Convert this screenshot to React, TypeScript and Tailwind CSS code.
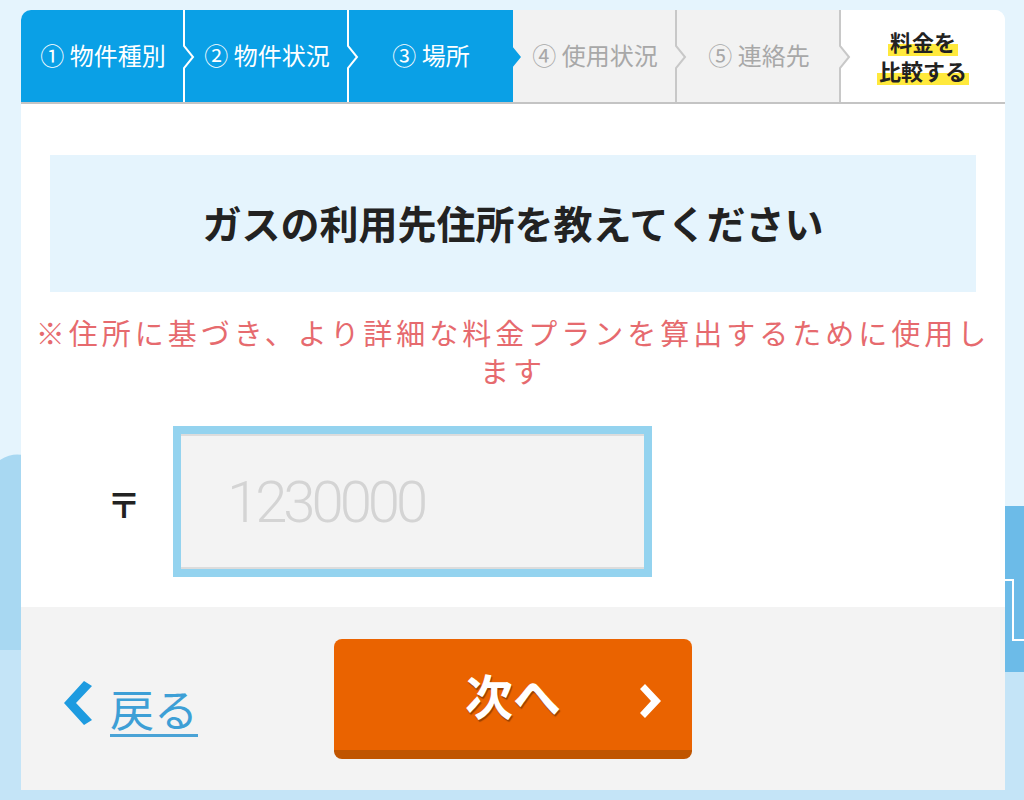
import { useState } from "react";

type StepState = "done" | "todo" | "final";

const steps: { label: string; state: StepState }[] = [
  { label: "① 物件種別", state: "done" },
  { label: "② 物件状況", state: "done" },
  { label: "③ 場所", state: "done" },
  { label: "④ 使用状況", state: "todo" },
  { label: "⑤ 連絡先", state: "todo" },
  { label: "", state: "final" },
];

const BLUE = "#0aa0e6";
const GREY = "#f2f2f2";

// chevron joint at the right edge of a step
function Joint({ fill, stroke }: { fill: string; stroke?: string }) {
  return (
    <svg
      className="absolute top-0 left-full z-10 -ml-[2px] h-[92px] w-[12px]"
      viewBox="0 0 12 92"
    >
      <polygon points="0,0 1,0 1,36 10,47 1,58 1,92 0,92" fill={fill} />
      {stroke && (
        <polyline
          points="1,0 1,36 10,47 1,58 1,92"
          fill="none"
          stroke={stroke}
          strokeWidth="2"
        />
      )}
    </svg>
  );
}

function StepBar() {
  return (
    <div className="flex h-[94px] border-b-2 border-[#c4c4c4]">
      {steps.map((s, i) => {
        const next = steps[i + 1];
        let joint = null;
        if (next) {
          if (s.state === "done" && next.state === "done") {
            joint = <Joint fill={BLUE} stroke="#ffffff" />;
          } else if (s.state === "done") {
            joint = <Joint fill={BLUE} />;
          } else {
            joint = <Joint fill={GREY} stroke="#c8c8c8" />;
          }
        }
        if (s.state === "final") {
          return (
            <div
              key={i}
              className="relative flex flex-1 flex-col items-center justify-center rounded-tr-[10px] bg-white text-[22px] leading-[29px] font-bold text-[#222]"
            >
              <span className="bg-[linear-gradient(transparent_58%,#ffe93c_58%)] px-[2px]">
                料金を
              </span>
              <span className="bg-[linear-gradient(transparent_58%,#ffe93c_58%)] px-[2px]">
                比較する
              </span>
            </div>
          );
        }
        return (
          <div
            key={i}
            className={
              s.state === "done"
                ? "relative flex flex-1 items-center justify-center bg-[#0aa0e6] text-[24px] text-white" +
                  (i === 0 ? " rounded-tl-[10px]" : "")
                : "relative flex flex-1 items-center justify-center bg-[#f2f2f2] text-[24px] text-[#a8a8a8]"
            }
          >
            <span className="pb-[2px]">{s.label}</span>
            {joint}
          </div>
        );
      })}
    </div>
  );
}

function Background() {
  return (
    <svg
      className="absolute inset-0 h-full w-full"
      viewBox="0 0 1024 800"
      preserveAspectRatio="none"
    >
      <rect x="0" y="0" width="1024" height="800" fill="#e5f4fd" />
      <path d="M0,460 C12,452 24,454 30,458 L30,652 L0,650 Z" fill="#a8d8f2" />
      <rect x="0" y="650" width="40" height="150" fill="#c4e4f7" />
      <rect x="990" y="506" width="34" height="166" fill="#6cbbe8" />
      <polyline
        points="1004,580 1013,580 1013,640 1024,640"
        fill="none"
        stroke="#ffffff"
        strokeWidth="2"
      />
      <rect x="990" y="672" width="34" height="128" fill="#c4e4f7" />
      <rect x="0" y="788" width="1024" height="12" fill="#c4e4f7" />
    </svg>
  );
}

export default function App() {
  const [zip, setZip] = useState("");

  return (
    <div className="relative min-h-screen w-full overflow-hidden font-['Noto_Sans_CJK_JP','Noto_Sans',sans-serif]">
      <Background />
      <div className="relative z-10 pt-[10px] pl-[21px]">
        <div className="w-[984px] rounded-t-[10px] bg-white">
          <StepBar />

          <div className="h-[503px] bg-white">
            <div className="px-[29px] pt-[51px]">
              <div className="flex h-[137px] items-center justify-center bg-[#e5f4fd] pb-[2px] text-[39px] font-bold text-[#222]">
                ガスの利用先住所を教えてください
              </div>
            </div>

            <p className="mt-[21px] px-[8px] text-center text-[29px] leading-[38px] tracking-[4px] text-[#e66a6e]">
              ※住所に基づき、より詳細な料金プランを算出するために使用します
            </p>

            <div className="mt-[37px] flex items-center pl-[86px]">
              <span className="w-[34px] pt-[4px] text-[34px] font-bold text-[#222]">〒</span>
              <div className="ml-[32px] h-[151px] w-[479px] border-[8px] border-[#94d3ef]">
                <input
                  value={zip}
                  onChange={(e) => setZip(e.target.value)}
                  placeholder="1230000"
                  className="h-full w-full border-y-2 border-[#dcdcdc] bg-[#f3f3f3] pl-[46px] font-['Roboto',sans-serif] text-[58px] font-light tracking-[-4px] text-[#444] outline-none placeholder:text-[#d4d4d4]"
                />
              </div>
            </div>
          </div>

          <div className="flex h-[183px] items-center bg-[#f3f3f3] pl-[41px]">
            <a href="#" className="mt-[24px] flex w-[272px] items-start">
              <svg width="30" height="44" viewBox="0 0 30 44" className="mt-[-4px]">
                <polygon points="22,0 30,5 14,22 30,39 22,44 2,22" fill="#1e9be0" />
              </svg>
              <span className="ml-[18px] border-b-[3px] border-[#4aa3d6] pb-[3px] text-[44px] leading-[46px] text-[#3d9fd6]">
                戻る
              </span>
            </a>

            <button className="relative flex h-[120px] w-[358px] items-center justify-center rounded-[8px] border-b-[9px] border-[#c05500] bg-[#ea6300]">
              <span className="text-[48px] font-bold text-white [text-shadow:1px_2px_1px_rgba(0,0,0,0.35)]">
                次へ
              </span>
              <svg
                width="22"
                height="34"
                viewBox="0 0 22 34"
                className="absolute top-[45px] right-[30px]"
              >
                <polygon points="5,0 21,17 5,34 0,29 11,17 0,5" fill="#ffffff" />
              </svg>
            </button>
          </div>
        </div>
      </div>
    </div>
  );
}
